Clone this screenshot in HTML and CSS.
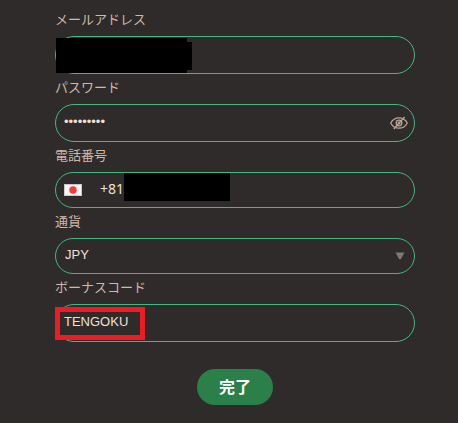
FILE: index.html
```html
<!DOCTYPE html>
<html lang="ja">
<head>
    <meta charset="UTF-8">
    <meta name="viewport" content="width=device-width, initial-scale=1.0">
    <title>完了</title>
    <link rel="stylesheet" href="styles.css">
</head>
<body>
    <form class="signup-form">
        <label class="form-label" for="email">メールアドレス</label>
        <div class="field">
            <input type="email" id="email" class="form-input">
            <span class="mask mask-email"></span>
            <span class="mask mask-email-end"></span>
        </div>

        <label class="form-label" for="password">パスワード</label>
        <div class="field">
            <input type="password" id="password" class="form-input" value="password1">
            <svg class="eye-icon" width="18" height="14" viewBox="0 0 18 14" fill="none" stroke="currentColor" stroke-width="1.3">
                <path d="M0.7 7C2.6 3.4 5.6 1.8 9 1.8S15.4 3.4 17.3 7C15.4 10.6 12.4 12.2 9 12.2S2.6 10.6 0.7 7Z"/>
                <circle cx="9" cy="7" r="2.8"/>
                <circle cx="9" cy="7" r="0.8"/>
                <path d="M3.8 13L14.6 1"/>
            </svg>
        </div>

        <label class="form-label" for="phone">電話番号</label>
        <div class="field field-small">
            <svg class="flag" width="18" height="12" viewBox="0 0 18 12">
                <rect width="18" height="12" fill="#c9c9c9"/>
                <rect x="1" y="1" width="16" height="10" fill="#f7f7f7"/>
                <circle cx="9" cy="6" r="3.7" fill="#fa3838"/>
            </svg>
            <input type="tel" id="phone" class="form-input phone-input" value="+81">
            <span class="mask mask-phone"></span>
        </div>

        <label class="form-label" for="currency">通貨</label>
        <div class="field field-small">
            <select id="currency" class="form-input form-select">
                <option>JPY</option>
            </select>
            <svg class="arrow" width="10" height="8" viewBox="0 0 10 8">
                <path d="M0.5 0.5H9.5L5.8 7.2H4.2Z" fill="currentColor"/>
            </svg>
        </div>

        <label class="form-label" for="bonus">ボーナスコード</label>
        <div class="field">
            <input type="text" id="bonus" class="form-input" value="TENGOKU">
            <span class="highlight"></span>
        </div>

        <button type="submit" class="submit-btn">完了</button>
    </form>
</body>
</html>
```

FILE: styles.css
```css
* {
    margin: 0;
    padding: 0;
    box-sizing: border-box;
}

body {
    background: #2f2b2b;
    color: #d0b9a8;
    font-family: "Liberation Sans", "Noto Sans CJK JP", sans-serif;
    font-size: 13px;
}

.signup-form {
    display: flex;
    flex-direction: column;
    padding: 6px 43px 18px 55px;
}

.form-label {
    padding: 4px 0 6px;
    line-height: 20px;
}

.field {
    position: relative;
    display: flex;
    align-items: center;
    height: 38px;
    padding: 0 6px 0 8px;
    border: 1px solid #42b983;
    border-radius: 20px;
}

.field-small {
    height: 36px;
}

.form-input {
    flex: 1;
    min-width: 0;
    height: 24px;
    padding-bottom: 3px;
    border: none;
    outline: none;
    background: transparent;
    color: #eee0d4;
    font-family: inherit;
    font-size: 13px;
}

.eye-icon {
    color: #b8a595;
}

.flag {
    margin-right: 18px;
}

.phone-input {
    font-family: "Noto Sans", sans-serif;
    font-size: 14px;
}

.form-select {
    appearance: none;
    padding-left: 1px;
}

.arrow {
    margin-right: 3px;
    color: #83766e;
}

.mask {
    position: absolute;
    background: #000;
}

.mask-email {
    top: 1px;
    left: 0;
    width: 131px;
    height: 35px;
}

.mask-email-end {
    top: 5px;
    left: 131px;
    width: 5px;
    height: 28px;
}

.mask-phone {
    top: 0;
    left: 68px;
    width: 106px;
    height: 28px;
}

.highlight {
    position: absolute;
    top: 2px;
    left: -1px;
    width: 90px;
    height: 33px;
    border: 5px solid #ed1c24;
    pointer-events: none;
}

.submit-btn {
    align-self: center;
    height: 36px;
    margin-top: 27px;
    padding: 0 22px 2px;
    border: none;
    border-radius: 18px;
    background: #2a8048;
    color: #fff;
    font-family: inherit;
    font-size: 16px;
    font-weight: bold;
    cursor: pointer;
}
```
